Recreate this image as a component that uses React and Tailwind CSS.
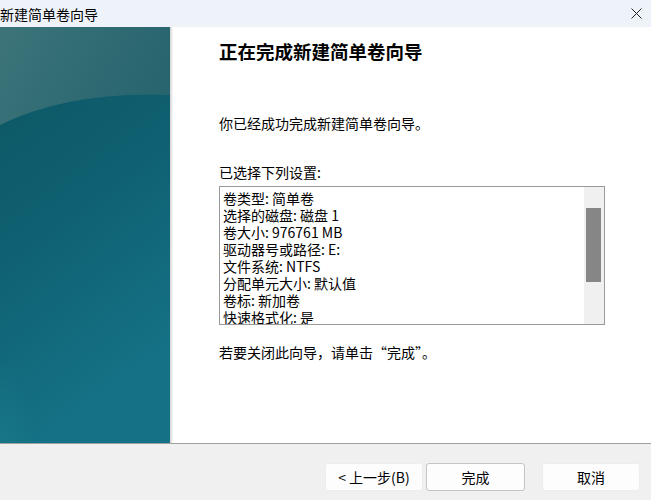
import React from "react";

const font = "font-['Noto_Sans_CJK_SC','Noto_Sans',sans-serif]";

function SidePanel() {
  return (
    <svg width="170" height="416" viewBox="0 0 170 416" className="block">
      <defs>
        <linearGradient id="base" x1="0" y1="0" x2="0.3" y2="1">
          <stop offset="0" stopColor="#0c5562" />
          <stop offset="0.5" stopColor="#0f6071" />
          <stop offset="1" stopColor="#157286" />
        </linearGradient>
        <linearGradient id="top" x1="0" y1="0" x2="1" y2="0.3">
          <stop offset="0" stopColor="#3c7479" />
          <stop offset="1" stopColor="#28656f" />
        </linearGradient>
        <radialGradient id="glow" cx="0" cy="1" r="0.2">
          <stop offset="0" stopColor="#1a7f8c" stopOpacity="0.5" />
          <stop offset="1" stopColor="#1a7f8c" stopOpacity="0" />
        </radialGradient>
      </defs>
      <rect width="170" height="416" fill="url(#base)" />
      <rect width="170" height="416" fill="url(#glow)" />
      <path d="M0 0 H170 V68 Q 70 64 0 98 Z" fill="url(#top)" />
    </svg>
  );
}

function Btn({ children, def }) {
  return (
    <button
      className={`h-[28px] flex items-center justify-center text-[14px] text-black bg-[#fdfdfd] border rounded-[3px] ${
        def ? "w-[99px] border-[#c4c4c4]" : "w-[98px] border-[#ededed]"
      }`}
    >
      {children}
    </button>
  );
}

export default function App() {
  const rows = [
    "卷类型: 简单卷",
    "选择的磁盘: 磁盘 1",
    "卷大小: 976761 MB",
    "驱动器号或路径: E:",
    "文件系统: NTFS",
    "分配单元大小: 默认值",
    "卷标: 新加卷",
    "快速格式化: 是",
    "启用文件和文件夹压缩: 否",
  ];
  return (
    <div className={`w-[651px] h-[500px] flex flex-col overflow-hidden bg-[#f0f0f0] text-black ${font}`}>
      <div className="h-[27px] shrink-0 bg-[#eef3fa] flex items-center justify-between">
        <span className="text-[14px] leading-[18px]">新建简单卷向导</span>
        <svg width="11" height="11" viewBox="0 0 11 11" className="mr-[9px]">
          <path d="M0.5 0.5 L10.5 10.5 M10.5 0.5 L0.5 10.5" stroke="#222" strokeWidth="1" fill="none" />
        </svg>
      </div>
      <div className="h-[416px] shrink-0 flex">
        <SidePanel />
        <div className="w-[3px] bg-gradient-to-r from-[#d4d4d4] to-[#fafafa]" />
        <div className="flex-1 bg-white pl-[46px] pt-[11px] flex flex-col">
          <div className="text-[18.5px] leading-[26px] font-bold">正在完成新建简单卷向导</div>
          <div className="mt-[49px] text-[14px] leading-[20px]">你已经成功完成新建简单卷向导。</div>
          <div className="mt-[29px] text-[14px] leading-[20px]">已选择下列设置:</div>
          <div className="mt-[4px] w-[386px] h-[139px] border border-[#9a9a9a] flex overflow-hidden">
            <div className="flex-1 pl-[3px] pt-[3px] text-[14px] leading-[17px] overflow-hidden">
              {rows.map((r) => (
                <div key={r} className="whitespace-nowrap">{r}</div>
              ))}
            </div>
            <div className="w-[20px] bg-[#f0f0f0] pt-[21px] pl-[2px]">
              <div className="w-[15px] h-[74px] bg-[#868686]" />
            </div>
          </div>
          <div className="mt-[17px] text-[14px] leading-[20px]">若要关闭此向导，请单击“完成”。</div>
        </div>
      </div>
      <div className="h-px bg-[#a0a0a0] shrink-0" />
      <div className="flex-1 flex items-start justify-end pt-[19px] pr-[11px]">
        <Btn>&lt; 上一步(B)</Btn>
        <div className="w-[3px]" />
        <Btn def>完成</Btn>
        <div className="w-[17px]" />
        <Btn>取消</Btn>
      </div>
    </div>
  );
}
